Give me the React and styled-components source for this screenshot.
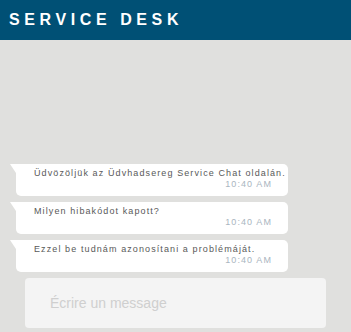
import styled, { createGlobalStyle } from "styled-components";

const GlobalStyle = createGlobalStyle`
  html, body {
    margin: 0;
    padding: 0;
    background: #e0e0de;
  }
  * {
    box-sizing: border-box;
  }
`;

const Page = styled.div`
  display: flex;
  flex-direction: column;
  width: 351px;
  height: 332px;
  background: #e0e0de;
  font-family: "Liberation Sans", Arial, sans-serif;
`;

const Header = styled.div`
  display: flex;
  align-items: center;
  height: 40px;
  padding-left: 9px;
  background: #005075;
  color: #fff;
  font-size: 16px;
  font-weight: bold;
  letter-spacing: 4.6px;
`;

const Messages = styled.div`
  flex: 1;
  display: flex;
  flex-direction: column;
  justify-content: flex-end;
  gap: 6px;
  padding-left: 16px;
`;

const Bubble = styled.div`
  position: relative;
  width: 272px;
  height: 32px;
  padding: 4px 16px 0 18px;
  background: #fff;
  border-radius: 0 5px 5px 5px;

  &::before {
    content: "";
    position: absolute;
    left: -6px;
    top: 0;
    border-top: 9px solid #fff;
    border-left: 6px solid transparent;
  }
`;

const Text = styled.div`
  font-size: 9px;
  line-height: 11px;
  letter-spacing: 1.1px;
  color: #595959;
  white-space: nowrap;
`;

const Time = styled.div`
  font-size: 9px;
  line-height: 10px;
  letter-spacing: 1.1px;
  color: #a9b5c0;
  text-align: right;
`;

const InputBox = styled.div`
  display: flex;
  align-items: center;
  height: 50px;
  margin: 6px 25px 4px 25px;
  padding-left: 25px;
  background: #f4f4f4;
  border-radius: 4px;
  font-size: 14px;
  color: #cfcfcf;
`;

const messages = [
  { id: 1, text: "Üdvözöljük az Üdvhadsereg Service Chat oldalán.", time: "10:40 AM" },
  { id: 2, text: "Milyen hibakódot kapott?", time: "10:40 AM" },
  { id: 3, text: "Ezzel be tudnám azonosítani a problémáját.", time: "10:40 AM" },
];

const App = () => {
  return (
    <Page>
      <GlobalStyle />
      <Header>SERVICE DESK</Header>
      <Messages>
        {messages.map((m) => (
          <Bubble key={m.id}>
            <Text>{m.text}</Text>
            <Time>{m.time}</Time>
          </Bubble>
        ))}
      </Messages>
      <InputBox>Écrire un message</InputBox>
    </Page>
  );
};

export default App;
